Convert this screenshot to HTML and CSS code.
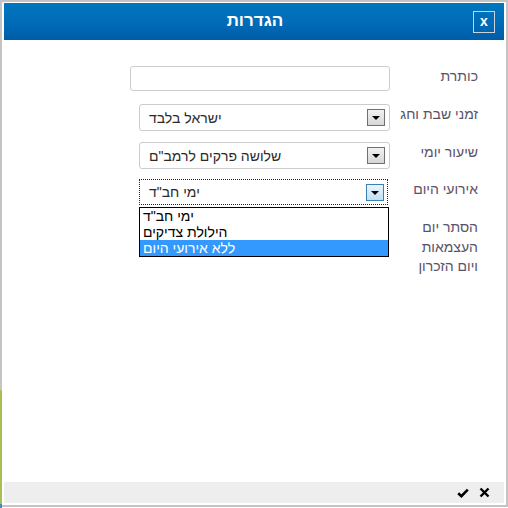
FILE: index.html
```html
<!DOCTYPE html>
<html lang="he">
<head>
<meta charset="utf-8">
<link rel="stylesheet" href="styles.css">
</head>
<body>
<div class="page">
  <div class="edge"></div>
  <div class="frame">
    <div class="dialog">
      <div class="header">
        <div class="title">הגדרות</div>
        <div class="close">x</div>
      </div>
      <div class="content">
        <div class="row row-title">
          <div class="label">כותרת</div>
          <div class="field"><div class="input"></div></div>
        </div>
        <div class="row row-s1">
          <div class="label">זמני שבת וחג</div>
          <div class="field">
            <div class="select">
              <span class="value" dir="rtl">ישראל בלבד</span>
              <span class="arrow"><span class="tri"></span></span>
            </div>
          </div>
        </div>
        <div class="row row-s2">
          <div class="label">שיעור יומי</div>
          <div class="field">
            <div class="select">
              <span class="value" dir="rtl">שלושה פרקים לרמב"ם</span>
              <span class="arrow"><span class="tri"></span></span>
            </div>
          </div>
        </div>
        <div class="row row-s3">
          <div class="label">אירועי היום</div>
          <div class="field field-open">
            <div class="select focused">
              <span class="value" dir="rtl">ימי חב"ד</span>
              <span class="arrow"><span class="tri"></span></span>
            </div>
            <div class="listbox">
              <div class="opt"><span dir="rtl">ימי חב"ד</span></div>
              <div class="opt"><span dir="rtl">הילולת צדיקים</span></div>
              <div class="opt sel"><span dir="rtl">ללא אירועי היום</span></div>
            </div>
          </div>
        </div>
        <div class="row row-hide">
          <div class="label multi">הסתר יום העצמאות ויום הזכרון</div>
          <div class="field"></div>
        </div>
      </div>
      <div class="footer">
        <svg class="ic" width="12" height="10" viewBox="0 0 12 10"><path d="M1.2 5.2 L4.4 8.2 L10.8 1.6" fill="none" stroke="#000" stroke-width="2.6"/></svg>
        <svg class="ic" width="11" height="11" viewBox="0 0 11 11"><path d="M1.5 1.5 L9.5 9.5 M9.5 1.5 L1.5 9.5" fill="none" stroke="#000" stroke-width="2.4"/></svg>
      </div>
    </div>
  </div>
</div>
</body>
</html>
```
FILE: styles.css
```css
html, body {
  margin: 0;
  padding: 0;
  background: #ffffff;
}
body {
  width: 508px;
  height: 508px;
  overflow: hidden;
  font-family: "Liberation Sans", Arial, sans-serif;
}
.page {
  display: flex;
  width: 508px;
  height: 508px;
}
.edge {
  width: 2px;
  flex: none;
  background: linear-gradient(to bottom, #c4c4c4 0, #c4c4c4 390px, #a7bf54 390px, #a7bf54 504px, #3d8fb3 504px);
}
.frame {
  flex: 1;
  box-sizing: border-box;
  height: 507px;
  border: 2px solid #c4c4c4;
  border-left: none;
  padding: 1px 2px 1px 2px;
  background: #fff;
  display: flex;
}
.dialog {
  flex: 1;
  display: flex;
  flex-direction: column;
  background: #fff;
}
.header {
  height: 37px;
  flex: none;
  background: linear-gradient(to bottom, #0076be 0%, #006ab7 60%, #005ca6 100%);
  display: flex;
  align-items: center;
  justify-content: center;
  position: relative;
}
.title {
  color: #fff;
  font-weight: bold;
  font-size: 17px;
  line-height: 20px;
  margin-top: -1px;
  margin-left: 2px;
}
.close {
  position: absolute;
  right: 9px;
  top: 8px;
  width: 20px;
  height: 20px;
  border: 1px solid #c9d3dc;
  color: #fff;
  font-weight: bold;
  font-size: 14px;
  line-height: 19px;
  text-align: center;
}
.content {
  flex: 1;
  direction: rtl;
  padding: 26px 26px 0 0;
}
.row {
  display: flex;
  align-items: flex-start;
}
.label {
  width: 72px;
  flex: none;
  color: #5a5268;
  font-size: 14px;
  line-height: 20px;
  text-align: right;
  white-space: nowrap;
}
.label.multi {
  white-space: normal;
  line-height: 19.5px;
}
.field {
  direction: ltr;
  position: relative;
  margin-right: 16px;
}
.field.field-open {
  margin-right: 18px;
}
.row-s1 { margin-top: 13px; }
.row-s2 { margin-top: 11px; }
.row-s3 { margin-top: 10px; }
.row-hide { margin-top: 13px; }
.input {
  box-sizing: border-box;
  width: 260px;
  height: 25px;
  border: 1px solid #cccccc;
  border-radius: 3px;
  background: #fff;
}
.select {
  box-sizing: border-box;
  width: 251px;
  height: 27px;
  border: 1px solid #cccccc;
  border-radius: 3px;
  background: #fff;
  display: flex;
  align-items: center;
  justify-content: space-between;
  padding: 0 4px 0 9px;
}
.select.focused {
  height: 26px;
  width: 249px;
  border: 1px dotted #222;
  border-radius: 0;
  padding-right: 3px;
}
.value {
  font-size: 14px;
  color: #2a2a2a;
  line-height: 16px;
}
.arrow {
  box-sizing: border-box;
  width: 18px;
  height: 17px;
  border: 1px solid #707070;
  background: linear-gradient(to bottom, #f2f2f2, #d6d6d6);
  display: flex;
  align-items: center;
  justify-content: center;
}
.focused .arrow {
  border-color: #3c7fb1;
  background: linear-gradient(to bottom, #e8f5fc, #bfe1f5);
}
.tri {
  width: 0;
  height: 0;
  border-left: 4px solid transparent;
  border-right: 4px solid transparent;
  border-top: 4px solid #000;
  margin-top: 1px;
}
.listbox {
  position: absolute;
  left: 0;
  top: 28px;
  box-sizing: border-box;
  width: 250px;
  border: 1px solid #000;
  background: #fff;
  z-index: 2;
}
.opt {
  height: 16px;
  line-height: 16px;
  font-size: 14px;
  color: #000;
  padding-left: 3px;
}
.opt.sel {
  background: #3399ff;
  color: #fff;
}
.footer {
  height: 21px;
  flex: none;
  background: #eeeeee;
  display: flex;
  align-items: center;
  justify-content: flex-end;
  gap: 10px;
  padding-right: 14px;
  margin-bottom: 1px;
}
.ic {
  display: block;
}
```
